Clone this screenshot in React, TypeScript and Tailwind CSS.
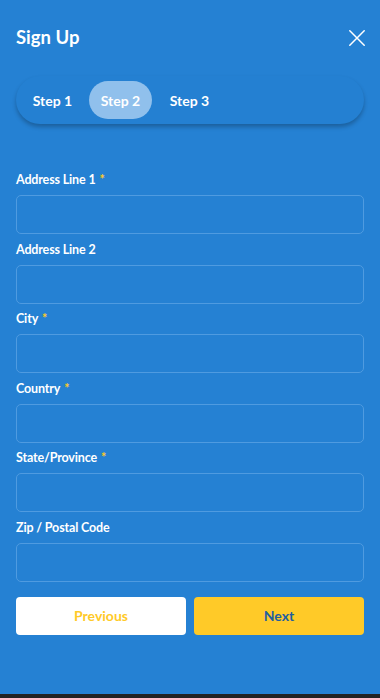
import React from "react";

const fields = [
  { label: "Address Line 1", req: true },
  { label: "Address Line 2", req: false },
  { label: "City", req: true },
  { label: "Country", req: true },
  { label: "State/Province", req: true },
  { label: "Zip / Postal Code", req: false },
];

export default function App() {
  return (
    <div
      className="w-[380px] h-[698px] bg-[#2581d3] flex flex-col relative"
      style={{ fontFamily: "Lato, 'Noto Sans', sans-serif" }}
    >
      <div className="flex items-center justify-between pl-4 pr-[15px] pt-[25px] h-[50px]">
        <h1 className="text-white text-[18.5px] font-bold">Sign Up</h1>
        <svg width="16" height="16" viewBox="0 0 16 16">
          <path d="M0.8 0.8 L15.2 15.2 M15.2 0.8 L0.8 15.2" stroke="white" strokeWidth="1.5" strokeLinecap="round" />
        </svg>
      </div>

      <div className="mx-4 mt-[26px] h-[48px] rounded-full bg-[#2480d2] shadow-[0_3px_4px_rgba(0,0,0,0.25)] flex items-center px-[5px]">
        <div className="w-[63px] h-[38px] flex items-center justify-center text-white text-[14px] font-bold">Step 1</div>
        <div className="ml-[5px] w-[63px] h-[38px] rounded-full bg-[#90c0ec] flex items-center justify-center text-white text-[14px] font-bold">Step 2</div>
        <div className="ml-[6px] w-[63px] h-[38px] flex items-center justify-center text-white text-[14px] font-bold">Step 3</div>
      </div>

      <div className="mx-4 mt-[48px] flex flex-col gap-[7.6px]">
        {fields.map((f) => (
          <div key={f.label} className="flex flex-col">
            <label className="text-white text-[12.5px] tracking-[-0.15px] font-bold h-[16px] leading-[16px]">
              {f.label}
              {f.req && <span className="text-[#ffca28] ml-1">*</span>}
            </label>
            <div className="mt-[7px] h-[39px] rounded-[5px] border border-[#4f9be0]" />
          </div>
        ))}
      </div>

      <div className="mx-4 mt-[15px] flex gap-2">
        <button className="flex-1 h-[38px] rounded-[4px] bg-white text-[#ffca28] text-[14px] font-bold">Previous</button>
        <button className="flex-1 h-[38px] rounded-[4px] bg-[#ffca28] text-[#1e5ea0] text-[14px] font-bold">Next</button>
      </div>

      <div className="absolute left-0 right-0 bottom-0 h-[4px] bg-[#222]" />
    </div>
  );
}
